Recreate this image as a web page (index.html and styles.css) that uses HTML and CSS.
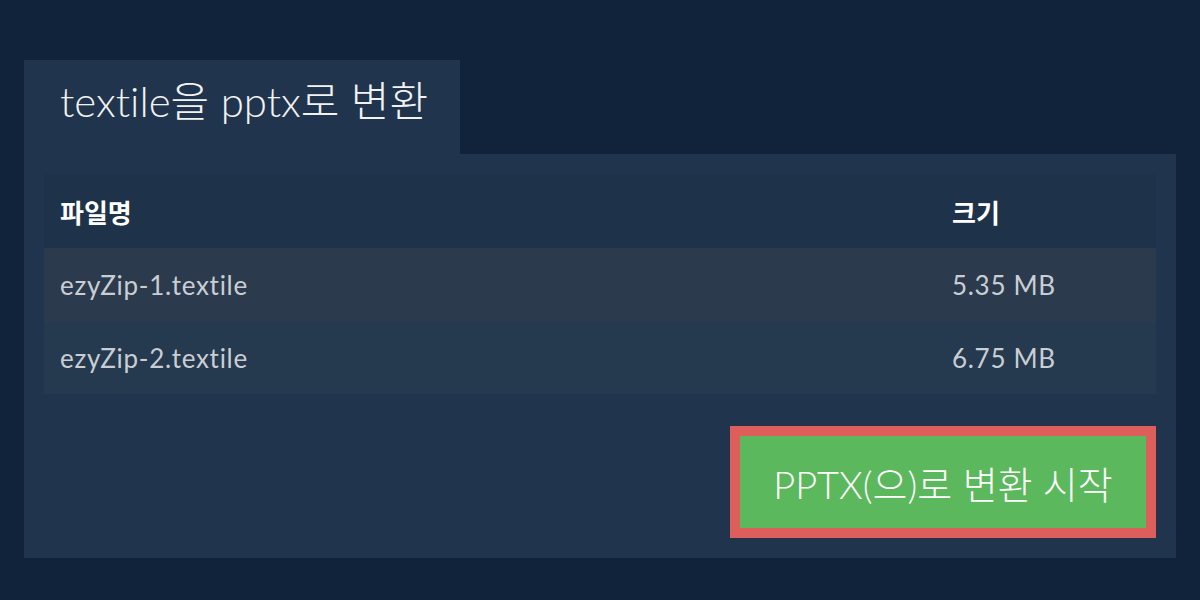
FILE: index.html
```html
<!DOCTYPE html>
<html lang="ko">
<head>
<meta charset="utf-8">
<link rel="stylesheet" href="styles.css">
</head>
<body>
<div class="wrap">
  <div class="tab">textile을 pptx로 변환</div>
  <div class="panel">
    <div class="table">
      <div class="row head"><div class="name">파일명</div><div class="size">크기</div></div>
      <div class="row odd"><div class="name">ezyZip-1.textile</div><div class="size">5.35 MB</div></div>
      <div class="row even"><div class="name">ezyZip-2.textile</div><div class="size">6.75 MB</div></div>
    </div>
    <div class="actions">
      <button class="convert">PPTX(으)로 변환 시작</button>
    </div>
  </div>
</div>
</body>
</html>
```
FILE: styles.css
```css
html, body {
  margin: 0;
  padding: 0;
  background: #10233a;
  width: 1200px;
  height: 600px;
  overflow: hidden;
}
body {
  font-family: Lato, "Noto Sans CJK KR", sans-serif;
  font-variant-ligatures: none;
}
.wrap {
  padding: 60px 24px 0 24px;
}
.tab {
  width: 436px;
  height: 94px;
  box-sizing: border-box;
  background: #20354d;
  color: #f2f2f2;
  font-size: 42px;
  font-weight: 300;
  padding: 17px 0 0 36px;
  line-height: 48px;
}
.panel {
  background: #20354d;
  height: 404px;
  box-sizing: border-box;
  padding: 20px 20px 0 20px;
}
.table {
  display: flex;
  flex-direction: column;
}
.row {
  display: flex;
  align-items: center;
  padding-left: 16px;
}
.row .name { flex: 1; }
.row .size { width: 204px; }
.head {
  height: 74px;
  background: #1e3249;
  color: #ffffff;
  font-weight: 700;
  font-size: 26px;
}
.odd, .even {
  color: #c9ced4;
  font-size: 26px;
  letter-spacing: 0.7px;
}
.odd { height: 74px; background: #2b3b4d; }
.even { height: 72px; background: #25394f; }
.actions {
  display: flex;
  justify-content: flex-end;
  padding-top: 32px;
}
.convert {
  width: 426px;
  height: 112px;
  box-sizing: border-box;
  border: 10px solid #dd5f5b;
  background: #5cb85c;
  color: #ffffff;
  font-family: Lato, "Noto Sans CJK KR", sans-serif;
  font-variant-ligatures: none;
  font-weight: 300;
  font-size: 38px;
  padding: 0;
  cursor: pointer;
}
```
